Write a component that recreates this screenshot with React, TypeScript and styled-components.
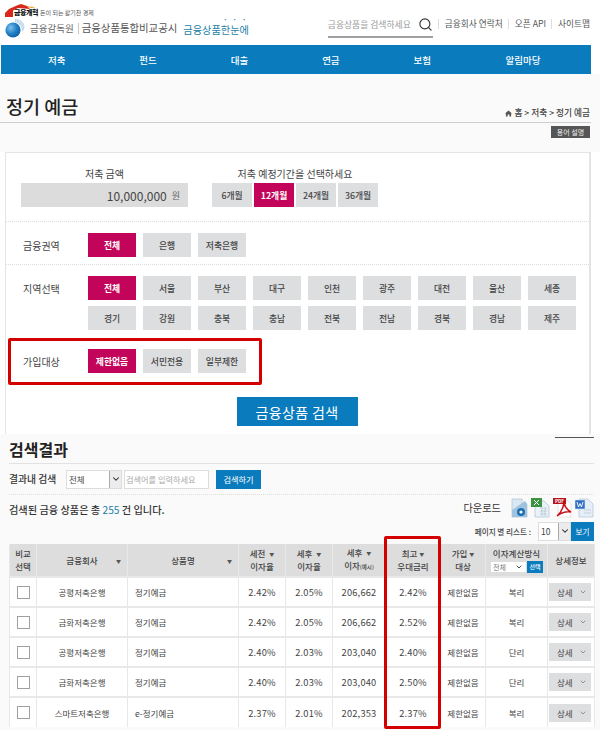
import React from "react";
import styled, { createGlobalStyle } from "styled-components";
import { ChevronDown, Search } from "lucide-react";

const GlobalStyle = createGlobalStyle`
	html, body {
		margin: 0;
		padding: 0;
		background: #fff;
	}
	body {
		font-family: "Noto Sans CJK KR", "Noto Sans", sans-serif;
		color: #3d3d3d;
	}
	* {
		box-sizing: border-box;
	}
`;

const Page = styled.div`
	width: 600px;
	height: 730px;
	overflow: hidden;
	background: #fff;
`;

/* header */
const Header = styled.header`
	height: 45px;
	display: flex;
	justify-content: space-between;
	align-items: flex-end;
	padding: 3px 10px 7px 5px;
`;

const Brand = styled.div`
	display: flex;
	flex-direction: column;
	gap: 1px;
`;

const BrandTop = styled.div`
	display: flex;
	align-items: flex-end;
	gap: 1px;
	height: 16px;
`;

const LogoMark = styled.div`
	position: relative;
	width: 34px;
	height: 16px;
`;

const LogoText = styled.span`
	position: absolute;
	left: 9px;
	top: 7px;
	font-size: 7px;
	line-height: 9px;
	font-weight: 900;
	letter-spacing: -0.4px;
	color: #111;
	white-space: nowrap;
`;

const Tagline = styled.span`
	font-size: 6px;
	line-height: 10px;
	color: #555;
	margin-bottom: -1px;
`;

const BrandMain = styled.div`
	display: flex;
	align-items: center;
	height: 20px;
`;

const BrandOrg = styled.span`
	font-size: 9.5px;
	color: #666;
	margin-left: 5px;
	white-space: nowrap;
`;

const BrandDivider = styled.span`
	width: 1px;
	height: 11px;
	background: #c8c8c8;
	margin: 0 3px 0 4px;
`;

const BrandSite = styled.span`
	font-size: 10.4px;
	line-height: 14px;
	color: #555;
	white-space: nowrap;
`;

const BrandAccent = styled.span`
	font-size: 10.2px;
	line-height: 14px;
	color: #1c7fa6;
	margin-left: 6px;
	margin-bottom: 5px;
	white-space: nowrap;
`;

const Dotted = styled.span`
	text-emphasis: filled dot #1c7fa6;
	text-emphasis-position: over right;
`;

const Utility = styled.div`
	display: flex;
	align-items: center;
	height: 24px;
`;

const SearchBox = styled.div`
	width: 105px;
	height: 24px;
	display: flex;
	align-items: center;
	justify-content: space-between;
	border-bottom: 2px solid #a0a0a0;
	font-size: 8.8px;
	color: #9a9a9a;
	padding-bottom: 2px;
	white-space: nowrap;
`;

const UtilLink = styled.span`
	font-size: 8.7px;
	color: #555;
	white-space: nowrap;
	margin-left: 5px;
	padding-left: 6px;
	border-left: 1px solid #ddd;
	line-height: 10px;
	margin-bottom: 5px;
`;

const Nav = styled.nav`
	height: 29px;
	margin: 0 9px 0 1px;
	padding-left: 10px;
	background: #0a7bbd;
	display: grid;
	grid-template-columns: repeat(5, 91.4px) 110px;
	align-items: center;
`;

const NavItem = styled.a`
	text-align: center;
	font-size: 9.5px;
	font-weight: 500;
	color: #fff;
`;

/* page title */
const TitleArea = styled.div`
	background: #fafafa;
	height: 78px;
	padding-right: 9px;
`;

const TitleBar = styled.div`
	height: 49px;
	display: flex;
	justify-content: space-between;
	align-items: flex-end;
	padding: 0 1px 2px 6px;
	border-bottom: 1px solid #cfcfcf;
`;

const Title = styled.h1`
	margin: 0;
	font-size: 18.5px;
	line-height: 28px;
	font-weight: 500;
	color: #222;
`;

const Crumbs = styled.div`
	display: flex;
	align-items: center;
	gap: 2px;
	font-size: 8.7px;
	line-height: 12px;
	font-weight: 500;
	color: #444;
	margin-bottom: 1px;
`;

const TermRow = styled.div`
	display: flex;
	justify-content: flex-end;
	padding: 3px 1px 0 0;
`;

const TermBadge = styled.span`
	width: 39px;
	height: 12px;
	background: #565656;
	color: #eee;
	font-size: 7px;
	line-height: 12px;
	text-align: center;
`;

/* filter panel */
const Panel = styled.section`
	width: 586px;
	height: 282px;
	margin-left: 5px;
	background: #fff;
	border: 1px solid #e4e4e4;
	border-width: 1px 2px 0 1px;
`;

const AmountRow = styled.div`
	height: 69px;
	display: flex;
	padding: 12px 0 0 15px;
	border-bottom: 1px dotted #ddd;
`;

const AmountCol = styled.div`
	width: 167px;
	margin-right: 24px;
`;

const PeriodCol = styled.div`
	width: 166px;
`;

const ColLabel = styled.div`
	font-size: 10px;
	line-height: 18px;
	text-align: center;
	color: #444;
	height: 18px;
	white-space: nowrap;
`;

const AmountBox = styled.div`
	height: 24px;
	background: #dcdcdc;
	display: flex;
	align-items: center;
	justify-content: flex-end;
	gap: 5px;
	padding-right: 8px;
	font-size: 12px;
	color: #444;
`;

const Won = styled.span`
	font-size: 9px;
	color: #666;
`;

const PeriodList = styled.div`
	display: flex;
	gap: 2px;
`;

const Choice = styled.button<{ $on?: boolean; $w?: number }>`
	width: ${(p) => p.$w ?? 48}px;
	height: 24px;
	padding: 0;
	border: none;
	background: ${(p) => (p.$on ? "#c2045a" : "#dddee0")};
	color: ${(p) => (p.$on ? "#fff" : "#444")};
	font-family: inherit;
	font-size: 8.8px;
	font-weight: ${(p) => (p.$on ? 700 : 500)};
`;

const FilterRow = styled.div<{ $h: number }>`
	position: relative;
	height: ${(p) => p.$h}px;
	display: flex;
	align-items: flex-start;
	padding: 11px 0 0 17px;
	border-bottom: ${(p) => (p.$h === 43 ? "1px dotted #ddd" : "none")};
`;

const FilterLabel = styled.div`
	width: 65px;
	flex: none;
	font-size: 10px;
	line-height: 25px;
	color: #444;
`;

const ChoiceGrid = styled.div`
	display: grid;
	grid-template-columns: repeat(9, 48px);
	grid-auto-rows: 24px;
	column-gap: 7px;
	row-gap: 6px;
`;

const RedFrame = styled.div`
	position: absolute;
	left: 2px;
	top: 0;
	width: 254px;
	height: 47px;
	border: 3px solid #d40000;
	border-radius: 2px;
	pointer-events: none;
`;

const SearchAction = styled.div`
	display: flex;
	justify-content: center;
	padding: 12px 1px 0 0;
`;

const BigButton = styled.button`
	width: 121px;
	height: 29px;
	padding: 0;
	border: none;
	background: #0a7bbd;
	color: #fff;
	font-family: inherit;
	font-size: 14px;
	letter-spacing: 0.4px;
`;

/* results */
const Results = styled.section`
	background: #fafafa;
	height: 297px;
	padding: 0 6px 0 9px;
`;

const ShortRule = styled.div`
	width: 39px;
	height: 1px;
	margin-left: auto;
	background: #555;
	position: relative;
	top: 3px;
`;

const ResultTitle = styled.h2`
	margin: 0;
	height: 29px;
	font-size: 16px;
	line-height: 29px;
	font-weight: 700;
	color: #222;
	border-bottom: 1px solid #e2e2e2;
`;

const InnerSearch = styled.div`
	height: 31px;
	display: flex;
	align-items: center;
	border-bottom: 1px dotted #ddd;
`;

const InnerLabel = styled.span`
	width: 57px;
	font-size: 9.8px;
	font-weight: 500;
	color: #333;
	white-space: nowrap;
`;

const SelectBox = styled.div<{ $w: number; $h: number; $small?: boolean }>`
	width: ${(p) => p.$w}px;
	height: ${(p) => p.$h}px;
	display: flex;
	justify-content: space-between;
	align-items: ${(p) => (p.$small ? "center" : "stretch")};
	background: #fff;
	border: 1px solid #ddd;
	font-size: ${(p) => (p.$small ? "7px" : "8.5px")};
	font-weight: 400;
	color: ${(p) => (p.$small ? "#777" : "#444")};
	padding-left: 2px;
	padding-right: ${(p) => (p.$small ? "3px" : "0")};
`;

const SelectValue = styled.span`
	align-self: center;
`;

const SelectArrow = styled.span`
	width: 12px;
	display: flex;
	align-items: center;
	justify-content: center;
	background: #ececec;
	border-left: 1px solid #aaa;
	color: #222;
`;

const TextField = styled.div`
	width: 85px;
	height: 19px;
	margin-left: 2px;
	background: #fff;
	border: 1px solid #ddd;
	font-size: 8.2px;
	line-height: 17px;
	color: #aaa;
	padding-left: 1px;
	white-space: nowrap;
`;

const SmallBlue = styled.button`
	width: 45px;
	height: 19px;
	margin-left: 7px;
	padding: 0;
	border: none;
	background: #0a7bbd;
	color: #fff;
	font-family: inherit;
	font-size: 8.2px;
`;

const SummaryRow = styled.div`
	height: 29px;
	display: flex;
	justify-content: space-between;
	align-items: center;
`;

const Summary = styled.span`
	font-size: 10.2px;
	font-weight: 500;
	color: #333;
`;

const Count = styled.span`
	color: #1c7fa6;
	font-weight: 400;
`;

const Downloads = styled.div`
	display: flex;
	align-items: center;
	gap: 3px;
	margin-top: -4px;
`;

const DownloadLabel = styled.span`
	font-size: 10.2px;
	color: #333;
	margin-right: 7px;
`;

const ListOptions = styled.div`
	height: 20px;
	margin-top: -3px;
	display: flex;
	justify-content: flex-end;
	align-items: center;
`;

const ListLabel = styled.span`
	font-size: 7.6px;
	font-weight: 500;
	color: #444;
	margin-right: 7px;
`;

const ViewButton = styled.button`
	width: 23px;
	height: 19px;
	padding: 0;
	border: none;
	background: #0a7bbd;
	color: #fff;
	font-family: inherit;
	font-size: 7.5px;
`;

const TableWrap = styled.div`
	position: relative;
	margin-top: 3px;
	width: 585px;
`;

const ColumnFrame = styled.div`
	position: absolute;
	left: 375px;
	top: -8px;
	width: 57px;
	height: 193px;
	border: 3px solid #d40000;
	border-radius: 2px;
	pointer-events: none;
`;

const Table = styled.table`
	width: 585px;
	table-layout: fixed;
	border-collapse: collapse;
	background: #fff;
`;

const HeadCell = styled.th`
	height: 33px;
	padding: 0;
	background: #dddddd;
	border-left: 1px solid #e8e8e8;
	border-right: 1px solid #e8e8e8;
	font-size: 8.5px;
	line-height: 13px;
	font-weight: 500;
	color: #444;
	text-align: center;
`;

const HeadSpread = styled.div`
	display: flex;
	justify-content: space-between;
	align-items: center;
	padding: 0 6px;
`;

const SortMark = styled.span<{ $ghost?: boolean }>`
	font-size: 5px;
	color: #555;
	margin-left: 2px;
	vertical-align: 1px;
	visibility: ${(p) => (p.$ghost ? "hidden" : "visible")};
`;

const TinyNote = styled.span`
	font-size: 5.5px;
`;

const CalcTitle = styled.div`
	white-space: nowrap;
	letter-spacing: 0.1px;
`;

const CalcControls = styled.div`
	display: flex;
	justify-content: center;
	height: 12px;
	margin-top: 1px;
`;

const PickButton = styled.span`
	width: 16px;
	background: #0a7bbd;
	color: #fff;
	font-size: 6px;
	line-height: 12px;
`;

const BodyRow = styled.tr`
	height: 30px;
`;

const Cell = styled.td<{ $left?: boolean }>`
	height: 30px;
	padding: ${(p) => (p.$left ? "0 0 0 7px" : "0")};
	border: 1px solid #e8e8e8;
	border-width: 2px 1px 0;
	font-size: 8.5px;
	line-height: 12px;
	color: #444;
	text-align: ${(p) => (p.$left ? "left" : "center")};
	white-space: nowrap;
`;

const NumCell = styled(Cell)`
	font-size: 9.3px;
	letter-spacing: 0.2px;
`;

const CheckBox = styled.span`
	display: block;
	width: 13px;
	height: 13px;
	margin: 0 auto;
	background: #fff;
	border: 1px solid #a0a0a0;
`;

const DetailButton = styled.button`
	width: 42px;
	height: 18px;
	margin-left: 1px;
	padding: 0 4px 0 8px;
	border: none;
	background: #dddee0;
	color: #444;
	font-family: inherit;
	font-size: 8.5px;
	display: flex;
	align-items: center;
	justify-content: space-between;
`;

const navItems = ["저축", "펀드", "대출", "연금", "보험", "알림마당"];
const periods = ["6개월", "12개월", "24개월", "36개월"];
const regions = [
	"전체", "서울", "부산", "대구", "인천", "광주", "대전", "울산", "세종",
	"경기", "강원", "충북", "충남", "전북", "전남", "경북", "경남", "제주",
];
const columnWidths = [27, 91, 111, 47, 47, 53, 55, 45, 62, 47];

const products = [
	{ bank: "공평저축은행", name: "정기예금", before: "2.42%", after: "2.05%", interest: "206,662", best: "2.42%", calc: "복리" },
	{ bank: "금화저축은행", name: "정기예금", before: "2.42%", after: "2.05%", interest: "206,662", best: "2.52%", calc: "복리" },
	{ bank: "공평저축은행", name: "정기예금", before: "2.40%", after: "2.03%", interest: "203,040", best: "2.40%", calc: "단리" },
	{ bank: "금화저축은행", name: "정기예금", before: "2.40%", after: "2.03%", interest: "203,040", best: "2.50%", calc: "단리" },
	{ bank: "스마트저축은행", name: "e-정기예금", before: "2.37%", after: "2.01%", interest: "202,353", best: "2.37%", calc: "복리" },
];

const RoofLogo = () => (
	<svg width="34" height="16" viewBox="0 0 34 16">
		<path d="M0 9 L4 5 L13 1 L16 0 L22 2 L25 5 L13 4 L8 6.5 L8 13 L0 13 Z" fill="#d8281c" />
		<path d="M16 0 L26 4 L31 4 L22 2 Z" fill="#f08a1d" />
		<circle cx="27" cy="3" r="0.8" fill="#e8c020" />
	</svg>
);

const HomeGlyph = () => (
	<svg width="7" height="7" viewBox="0 0 8 8">
		<path d="M4 0.5 L8 4 H7 V7.5 H5 V5 H3 V7.5 H1 V4 H0 Z" fill="#555" />
	</svg>
);

const Globe = () => (
	<svg width="20" height="20" viewBox="0 0 20 20">
		<defs>
			<radialGradient id="globe" cx="0.35" cy="0.35" r="0.75">
				<stop offset="0" stopColor="#7fc0ea" />
				<stop offset="0.55" stopColor="#1f7fc4" />
				<stop offset="1" stopColor="#0d5a9c" />
			</radialGradient>
		</defs>
		<circle cx="8" cy="12" r="7.6" fill="url(#globe)" />
		<path d="M10 1 A9 9 0 0 1 19.5 9 A8 8 0 0 1 17 14 A9 9 0 0 0 10 4 Z" fill="#bcd8ec" />
		<path d="M11 2.4 A8 8 0 0 1 18.4 9 M11 3.6 A7 7 0 0 1 17.4 10" stroke="#fff" strokeWidth="0.5" fill="none" strokeDasharray="1 0.7" />
	</svg>
);

const HwpIcon = () => (
	<svg width="17" height="20" viewBox="0 0 17 20">
		<path d="M1 1 H11 L16 6 V19 H1 Z" fill="#dbe8f2" stroke="#b5c6d6" strokeWidth="0.8" />
		<path d="M11 1 V6 H16" fill="#fff" stroke="#b5c6d6" strokeWidth="0.8" />
		<path d="M1 19 L1 12 L14 3 L16 6 V19 Z" fill="#9fc3de" />
		<circle cx="10" cy="14" r="4" fill="#1b6fb0" />
		<circle cx="10" cy="14" r="1.6" fill="#fff" />
	</svg>
);

const ExcelIcon = () => (
	<svg width="19" height="20" viewBox="0 0 19 20">
		<path d="M4 3 H13 L18 8 V19 H4 Z" fill="#eaf1f7" stroke="#b5c6d6" strokeWidth="0.8" />
		<path d="M9 10 H16 M9 13 H16 M9 16 H16 M11 10 V18 M14 10 V18" stroke="#a9bccb" strokeWidth="0.6" />
		<rect x="0" y="0" width="11" height="9" fill="#3d9440" />
		<path d="M3 2 L8 7 M8 2 L3 7" stroke="#fff" strokeWidth="1" />
	</svg>
);

const PdfIcon = () => (
	<svg width="19" height="20" viewBox="0 0 19 20">
		<path d="M5 2 H14 L18 6 V19 H5 Z" fill="#fff" stroke="#d5d5d5" strokeWidth="0.6" />
		<path d="M11 5 C10 10 8 15 4 18 C8 15 13 13 18 14 C14 12 12 9 11 5 Z" fill="none" stroke="#c8141c" strokeWidth="1.5" />
		<rect x="0" y="0" width="13" height="6" fill="#b5121b" />
		<text x="6.5" y="5" fontSize="4.6" fontWeight="700" textAnchor="middle" fill="#fff">PDF</text>
	</svg>
);

const WordIcon = () => (
	<svg width="19" height="20" viewBox="0 0 19 20">
		<path d="M4 1 H13 L18 6 V19 H4 Z" fill="#e6eff7" stroke="#b5c6d6" strokeWidth="0.8" />
		<path d="M9 12 H16 M9 15 H16" stroke="#a9bccb" strokeWidth="0.6" />
		<rect x="0" y="2" width="10" height="9" fill="#2f6fc4" stroke="#cfe0f2" strokeWidth="0.6" />
		<path d="M2 4 L3.5 9 L5 5.5 L6.5 9 L8 4" stroke="#fff" strokeWidth="0.9" fill="none" />
	</svg>
);

export default function App() {
	return (
		<Page>
			<GlobalStyle />
			<Header>
				<Brand>
					<BrandTop>
						<LogoMark>
							<RoofLogo />
							<LogoText>금융개혁</LogoText>
						</LogoMark>
						<Tagline>돈이 되는 활기찬 경제</Tagline>
					</BrandTop>
					<BrandMain>
						<Globe />
						<BrandOrg>금융감독원</BrandOrg>
						<BrandDivider />
						<BrandSite>금융상품통합비교공시</BrandSite>
						<BrandAccent>
							금융상품<Dotted>한눈에</Dotted>
						</BrandAccent>
					</BrandMain>
				</Brand>
				<Utility>
					<SearchBox>
						금융상품을 검색하세요
						<Search size={15} strokeWidth={1.8} color="#333" />
					</SearchBox>
					<UtilLink>금융회사 연락처</UtilLink>
					<UtilLink>오픈 API</UtilLink>
					<UtilLink>사이트맵</UtilLink>
				</Utility>
			</Header>

			<Nav>
				{navItems.map((item) => (
					<NavItem key={item}>{item}</NavItem>
				))}
			</Nav>

			<TitleArea>
				<TitleBar>
					<Title>정기 예금</Title>
					<Crumbs>
						<HomeGlyph />
						<span>홈 &gt; 저축 &gt; 정기 예금</span>
					</Crumbs>
				</TitleBar>
				<TermRow>
					<TermBadge>용어 설명</TermBadge>
				</TermRow>
			</TitleArea>

			<Panel>
				<AmountRow>
					<AmountCol>
						<ColLabel>저축 금액</ColLabel>
						<AmountBox>
							10,000,000 <Won>원</Won>
						</AmountBox>
					</AmountCol>
					<PeriodCol>
						<ColLabel>저축 예정기간을 선택하세요</ColLabel>
						<PeriodList>
							{periods.map((p) => (
								<Choice key={p} $w={40} $on={p === "12개월"}>
									{p}
								</Choice>
							))}
						</PeriodList>
					</PeriodCol>
				</AmountRow>

				<FilterRow $h={43}>
					<FilterLabel>금융권역</FilterLabel>
					<ChoiceGrid>
						<Choice $on>전체</Choice>
						<Choice>은행</Choice>
						<Choice>저축은행</Choice>
					</ChoiceGrid>
				</FilterRow>

				<FilterRow $h={73}>
					<FilterLabel>지역선택</FilterLabel>
					<ChoiceGrid>
						{regions.map((r, i) => (
							<Choice key={r} $on={i === 0}>
								{r}
							</Choice>
						))}
					</ChoiceGrid>
				</FilterRow>

				<FilterRow $h={47}>
					<FilterLabel>가입대상</FilterLabel>
					<ChoiceGrid>
						<Choice $on>제한없음</Choice>
						<Choice>서민전용</Choice>
						<Choice>일부제한</Choice>
					</ChoiceGrid>
					<RedFrame />
				</FilterRow>

				<SearchAction>
					<BigButton>금융상품 검색</BigButton>
				</SearchAction>
			</Panel>

			<Results>
				<ShortRule />
				<ResultTitle>검색결과</ResultTitle>
				<InnerSearch>
					<InnerLabel>결과내 검색</InnerLabel>
					<SelectBox $w={56} $h={19}>
						<SelectValue>전체</SelectValue>
						<SelectArrow>
							<ChevronDown size={10} strokeWidth={2.5} />
						</SelectArrow>
					</SelectBox>
					<TextField>검색어를 입력하세요</TextField>
					<SmallBlue>검색하기</SmallBlue>
				</InnerSearch>
				<SummaryRow>
					<Summary>
						검색된 금융 상품은 총 <Count>255</Count> 건 입니다.
					</Summary>
					<Downloads>
						<DownloadLabel>다운로드</DownloadLabel>
						<HwpIcon />
						<ExcelIcon />
						<PdfIcon />
						<WordIcon />
					</Downloads>
				</SummaryRow>
				<ListOptions>
					<ListLabel>페이지 별 리스트 :</ListLabel>
					<SelectBox $w={33} $h={19}>
						<SelectValue>10</SelectValue>
						<SelectArrow>
							<ChevronDown size={10} strokeWidth={2.5} />
						</SelectArrow>
					</SelectBox>
					<ViewButton>보기</ViewButton>
				</ListOptions>
				<TableWrap>
					<Table>
						<colgroup>
							{columnWidths.map((w, i) => (
								<col key={i} width={w} />
							))}
						</colgroup>
						<thead>
							<tr>
								<HeadCell>
									비교
									<br />
									선택
								</HeadCell>
								<HeadCell>
									<HeadSpread>
										<SortMark $ghost>▼</SortMark>
										금융회사
										<SortMark>▼</SortMark>
									</HeadSpread>
								</HeadCell>
								<HeadCell>
									<HeadSpread>
										<SortMark $ghost>▼</SortMark>
										상품명
										<SortMark>▼</SortMark>
									</HeadSpread>
								</HeadCell>
								<HeadCell>
									세전 <SortMark>▼</SortMark>
									<br />
									이자율
								</HeadCell>
								<HeadCell>
									세후 <SortMark>▼</SortMark>
									<br />
									이자율
								</HeadCell>
								<HeadCell>
									세후 <SortMark>▼</SortMark>
									<br />
									이자<TinyNote>(예시)</TinyNote>
								</HeadCell>
								<HeadCell>
									최고<SortMark>▼</SortMark>
									<br />
									우대금리
								</HeadCell>
								<HeadCell>
									가입<SortMark>▼</SortMark>
									<br />
									대상
								</HeadCell>
								<HeadCell>
									<CalcTitle>이자계산방식</CalcTitle>
									<CalcControls>
										<SelectBox $w={37} $h={12} $small>
											<SelectValue>전체</SelectValue>
											<ChevronDown size={8} strokeWidth={2.5} color="#222" />
										</SelectBox>
										<PickButton>선택</PickButton>
									</CalcControls>
								</HeadCell>
								<HeadCell>상세정보</HeadCell>
							</tr>
						</thead>
						<tbody>
							{products.map((row, i) => (
								<BodyRow key={i}>
									<Cell>
										<CheckBox />
									</Cell>
									<Cell>{row.bank}</Cell>
									<Cell $left>{row.name}</Cell>
									<NumCell>{row.before}</NumCell>
									<NumCell>{row.after}</NumCell>
									<NumCell>{row.interest}</NumCell>
									<NumCell>{row.best}</NumCell>
									<Cell>제한없음</Cell>
									<Cell>{row.calc}</Cell>
									<Cell>
										<DetailButton>
											상세
											<ChevronDown size={8} color="#666" />
										</DetailButton>
									</Cell>
								</BodyRow>
							))}
						</tbody>
					</Table>
					<ColumnFrame />
				</TableWrap>
			</Results>
		</Page>
	);
}
